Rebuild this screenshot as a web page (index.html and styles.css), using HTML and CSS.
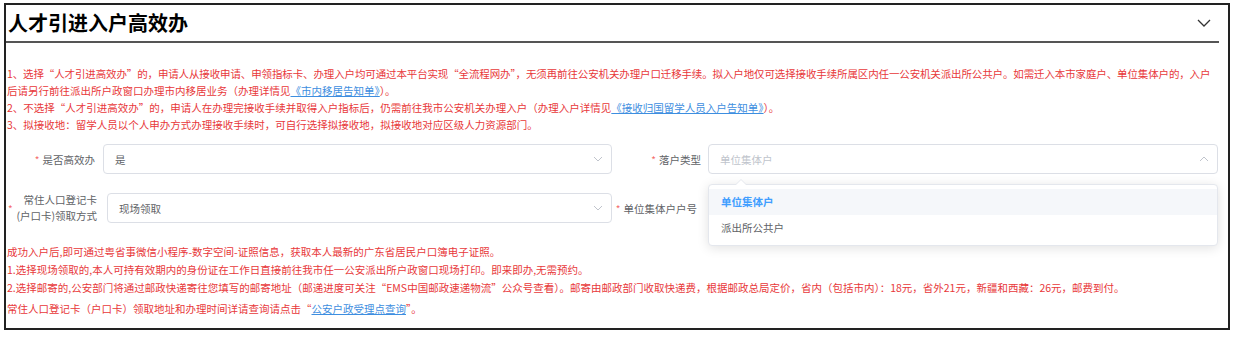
FILE: index.html
```html
<!DOCTYPE html>
<html lang="zh-CN">
<head>
<meta charset="utf-8">
<title>人才引进入户高效办</title>
<link rel="stylesheet" href="styles.css">
</head>
<body>
<div class="panel">
  <div class="head">
    <h2 class="title">人才引进入户高效办</h2>
    <svg class="head-arrow" width="14" height="8" viewBox="0 0 14 8"><polyline points="1,1 7,7 13,1" fill="none" stroke="#333" stroke-width="1.3"/></svg>
  </div>

  <div class="notice">
    <div class="line line-tight">1、选择“人才引进高效办”的，申请人从接收申请、申领指标卡、办理入户均可通过本平台实现“全流程网办”，无须再前往公安机关办理户口迁移手续。拟入户地仅可选择接收手续所属区内任一公安机关派出所公共户。如需迁入本市家庭户、单位集体户的，入户</div>
    <div class="line">后请另行前往派出所户政窗口办理市内移居业务（办理详情见<a class="link">《市内移居告知单》</a>）。</div>
    <div class="line">2、不选择“人才引进高效办”的，申请人在办理完接收手续并取得入户指标后，仍需前往我市公安机关办理入户（办理入户详情见<a class="link">《接收归国留学人员入户告知单》</a>）。</div>
    <div class="line">3、拟接收地：留学人员以个人申办方式办理接收手续时，可自行选择拟接收地，拟接收地对应区级人力资源部门。</div>
  </div>

  <div class="form">
    <div class="row">
      <div class="item item-left">
        <label class="label label-a"><span class="req">*</span>是否高效办</label>
        <div class="select">
          <span class="value">是</span>
          <svg class="arrow" width="10" height="6" viewBox="0 0 10 6"><polyline points="1,1 5,5 9,1" fill="none" stroke="#c0c4cc" stroke-width="1"/></svg>
        </div>
      </div>
      <div class="item item-right">
        <label class="label label-c"><span class="req">*</span>落户类型</label>
        <div class="select">
          <span class="placeholder">单位集体户</span>
          <svg class="arrow" width="10" height="6" viewBox="0 0 10 6"><polyline points="1,5 5,1 9,5" fill="none" stroke="#c0c4cc" stroke-width="1"/></svg>
        </div>
      </div>
    </div>
    <div class="row">
      <div class="item item-left">
        <label class="label label-b"><span class="req req-far">*</span><span class="two-line">常住人口登记卡<br>(户口卡)领取方式</span></label>
        <div class="select">
          <span class="value">现场领取</span>
          <svg class="arrow" width="10" height="6" viewBox="0 0 10 6"><polyline points="1,1 5,5 9,1" fill="none" stroke="#c0c4cc" stroke-width="1"/></svg>
        </div>
      </div>
      <div class="item item-right">
        <label class="label label-d"><span class="req">*</span>单位集体户户号</label>
        <div class="select"></div>
      </div>
    </div>
  </div>

  <div class="notes">
    <div class="nline">成功入户后,即可通过粤省事微信小程序-数字空间-证照信息，获取本人最新的广东省居民户口簿电子证照。</div>
    <div class="nline">1.选择现场领取的,本人可持有效期内的身份证在工作日直接前往我市任一公安派出所户政窗口现场打印。即来即办,无需预约。</div>
    <div class="nline">2.选择邮寄的,公安部门将通过邮政快递寄往您填写的邮寄地址（邮递进度可关注“EMS中国邮政速递物流”公众号查看）。邮寄由邮政部门收取快递费，根据邮政总局定价，省内（包括市内）：18元，省外21元，新疆和西藏：26元，邮费到付。</div>
    <div class="nline nline-last">常住人口登记卡（户口卡）领取地址和办理时间详请查询请点击“<a class="link">公安户政受理点查询</a>”。</div>
  </div>

  <div class="dropdown">
    <span class="caret"></span>
    <div class="option option-active">单位集体户</div>
    <div class="option">派出所公共户</div>
  </div>
</div>
</body>
</html>
```

FILE: styles.css
```css
html, body {
  background: #ffffff;
}
body {
  margin: 3px 6px 0 4px;
  font-family: "Noto Sans CJK SC", "Liberation Sans", sans-serif;
}
.panel {
  position: relative;
  border: 2px solid #222222;
  padding-bottom: 10px;
}
.head {
  height: 36px;
  margin-right: 9px;
  padding: 0 8px 0 2px;
  border-bottom: 2px solid #555555;
  display: flex;
  align-items: center;
  justify-content: space-between;
}
.title {
  margin: 0;
  font-size: 20px;
  line-height: 1;
  font-weight: bold;
  color: #000000;
}
.head-arrow {
  display: block;
}
.notice {
  padding: 22px 0 0 1px;
  color: #e8383a;
  font-size: 10.5px;
  line-height: 17px;
}
.line, .nline {
  white-space: nowrap;
}
.line-tight {
  letter-spacing: -0.13px;
}
.link {
  color: #3d8ee0;
  text-decoration: underline;
}
.form {
  padding-top: 11px;
}
.row {
  display: flex;
  height: 30px;
  margin-bottom: 19px;
}
.row:last-child {
  margin-bottom: 0;
}
.item {
  display: flex;
  align-items: center;
}
.item-left {
  flex: 0 0 606px;
}
.item-right {
  flex: 1;
  margin-right: 10px;
}
.label {
  font-size: 10.5px;
  color: #606266;
  display: flex;
  align-items: center;
  justify-content: flex-end;
  box-sizing: border-box;
  flex: none;
  height: 30px;
}
.label-a { width: 97px; padding-right: 8px; }
.label-b { width: 101px; padding-right: 10px; justify-content: space-between; padding-left: 2px; }
.label-c { width: 96px; padding-right: 7px; }
.label-d { width: 96px; padding-right: 11px; }
.req {
  color: #f56c6c;
  margin-right: 3px;
  font-size: 10px;
  align-self: flex-start;
  margin-top: 8px;
}
.req-far {
  align-self: center;
  margin-top: 0;
}
.two-line {
  text-align: right;
  line-height: 16px;
}
.select {
  flex: 1;
  height: 30px;
  box-sizing: border-box;
  border: 1px solid #dcdfe6;
  border-radius: 4px;
  display: flex;
  align-items: center;
  justify-content: space-between;
  padding: 0 8px 0 11px;
  font-size: 10.5px;
}
.value {
  color: #606266;
}
.placeholder {
  color: #c0c4cc;
}
.arrow {
  display: block;
}
.notes {
  padding-top: 20px;
  color: #e8383a;
  font-size: 10.5px;
  line-height: 18px;
  padding-left: 1px;
}
.nline-last {
  margin-top: 3px;
}
.dropdown {
  position: absolute;
  left: 702px;
  top: 179px;
  width: 510px;
  box-sizing: border-box;
  padding: 4px 0;
  background: #ffffff;
  border: 1px solid #e4e7ed;
  border-radius: 4px;
  box-shadow: 0 2px 12px rgba(0, 0, 0, 0.12);
}
.caret {
  position: absolute;
  top: -6px;
  left: 26px;
  width: 0;
  height: 0;
  border-left: 6px solid transparent;
  border-right: 6px solid transparent;
  border-bottom: 6px solid #e4e7ed;
}
.caret::after {
  content: "";
  position: absolute;
  left: -5px;
  top: 1px;
  border-left: 5px solid transparent;
  border-right: 5px solid transparent;
  border-bottom: 5px solid #ffffff;
}
.option {
  height: 26px;
  line-height: 26px;
  padding-left: 12px;
  font-size: 10.5px;
  color: #606266;
}
.option-active {
  background: #f5f7fa;
  color: #409eff;
  font-weight: bold;
}
```
